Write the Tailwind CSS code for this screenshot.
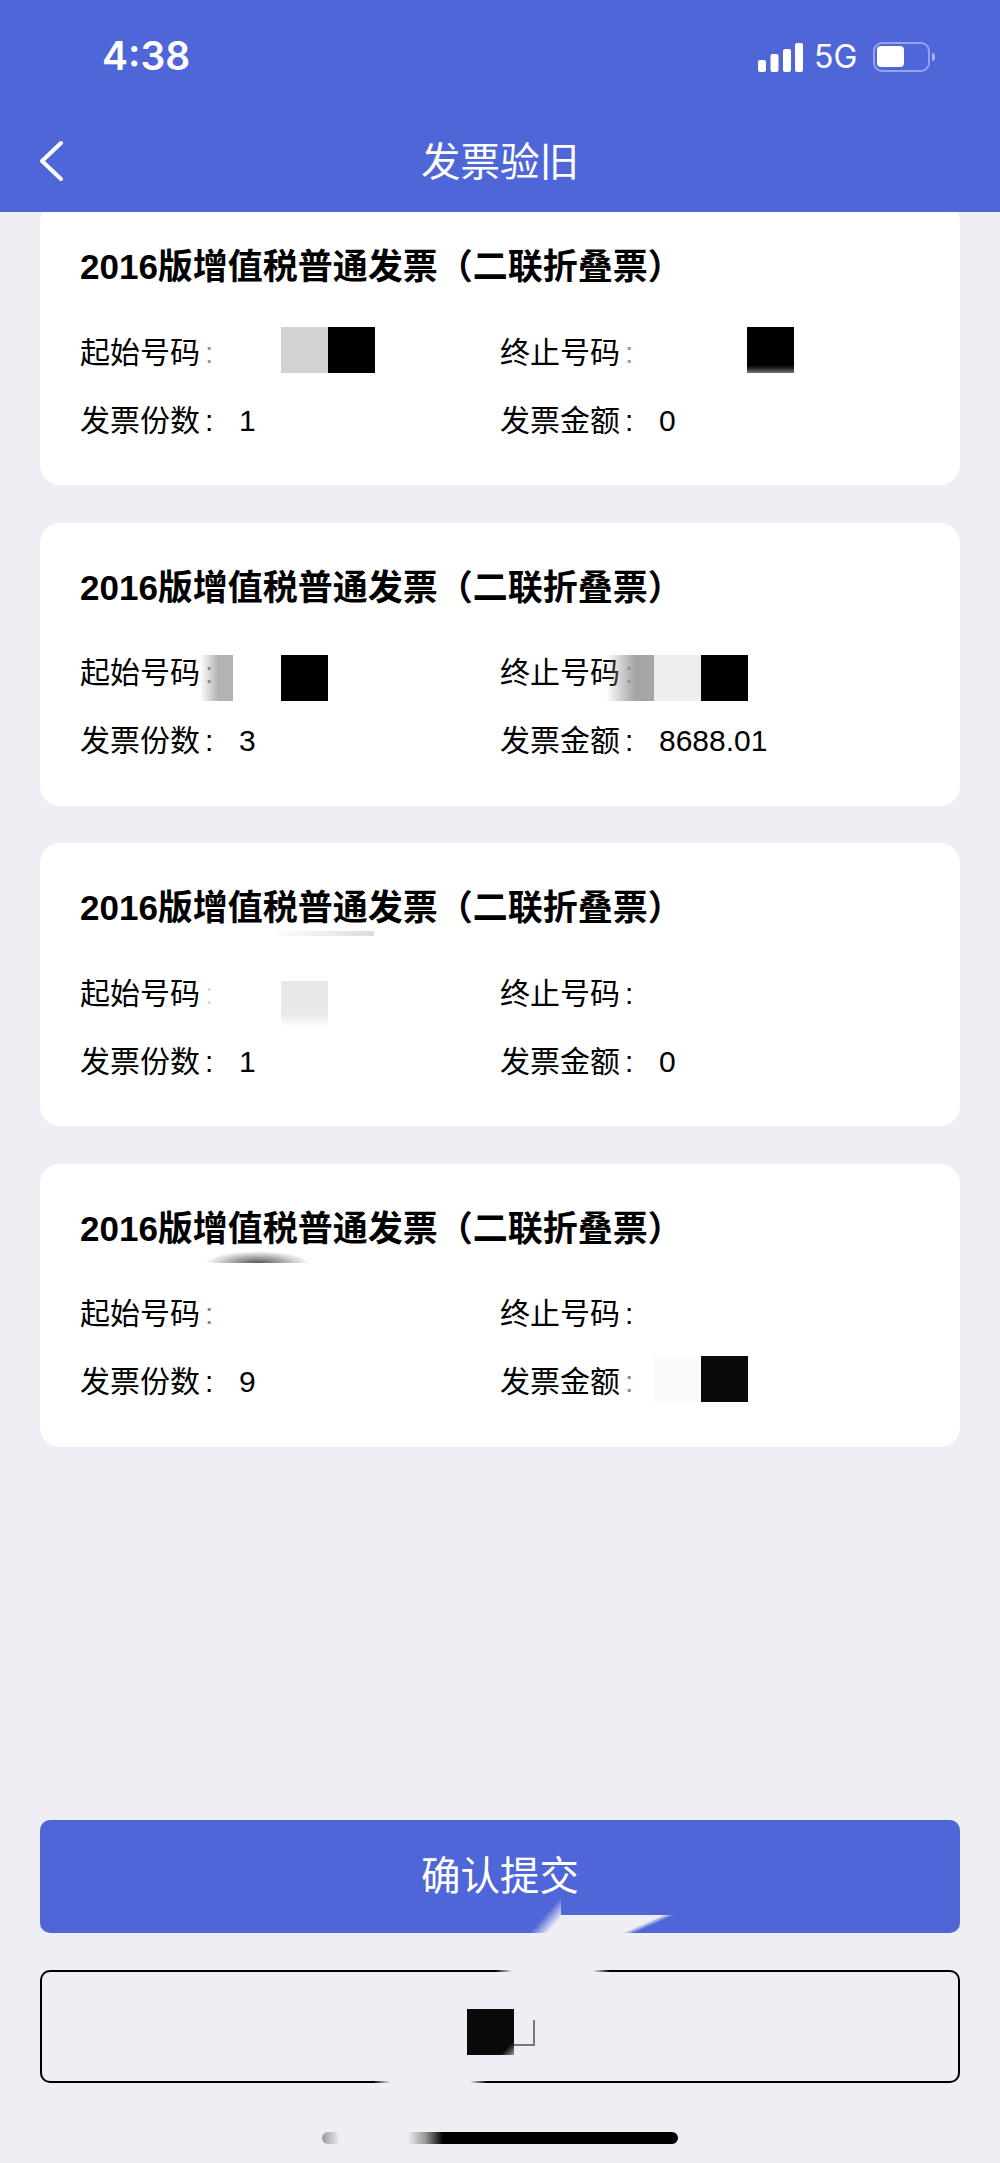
<!DOCTYPE html>
<html lang="zh-CN">
<head>
  <meta charset="UTF-8" />
  <meta name="viewport" content="width=device-width, initial-scale=1.0" />
  <title>发票验旧</title>
  <script src="https://cdn.jsdelivr.net/npm/@tailwindcss/browser@4"></script>
</head>
<body class="bg-[#efeef4] text-black font-['Liberation_Sans','Noto_Sans_CJK_SC',sans-serif]">
<div class="w-[1000px] h-[2163px] overflow-hidden flex flex-col">

  <!-- header with status bar -->
  <header class="relative z-10 h-[212px] shrink-0 bg-[#4f66d9] text-white">
    <div class="h-[114px] flex items-start justify-between pt-[33px] pl-[102px] pr-[65px]">
      <span class="font-['Inter'] font-semibold text-[39px] leading-[46px]">4:38</span>
      <div class="flex items-center pt-[6px]">
        <svg width="46" height="30" viewBox="0 0 46 30" fill="#fff" class="mr-[10px]">
          <rect x="0" y="18" width="8" height="12" rx="2" />
          <rect x="12.5" y="12" width="8" height="18" rx="2" />
          <rect x="25" y="7" width="8" height="23" rx="2" />
          <rect x="37" y="1" width="8" height="29" rx="2" />
        </svg>
        <span class="font-['Inter'] text-[32px] leading-[36px] w-[59px]">5G</span>
        <div class="w-[57px] h-[30px] rounded-[9px] border-2 border-white/40 p-[2px]">
          <div class="w-[27px] h-[21px] bg-white rounded-[4px]"></div>
        </div>
        <div class="w-[3px] h-[8px] ml-[2px] bg-white/50 rounded-r-full"></div>
      </div>
    </div>
    <div class="relative h-[92px] flex items-center justify-center">
      <svg width="26" height="44" viewBox="0 0 26 44" fill="none" stroke="#fff" stroke-width="4" stroke-linecap="round" stroke-linejoin="round" class="absolute left-[38px] top-[25px]">
        <path d="M23 4 L4 22 L23 40" />
      </svg>
      <span class="text-[39.5px] leading-[46px] mt-[4px]">发票验旧</span>
    </div>
  </header>

  <main class="flex-1 flex flex-col -mt-[10px] px-[40px]">
    <div class="flex flex-col gap-[37.5px]">

      <section class="relative h-[283px] rounded-[20px] bg-white pl-[40px]">
        <h2 class="pt-[43px] h-[87px] text-[35px] leading-[44px] font-bold">2016版增值税普通发票（二联折叠票）</h2>
        <div class="mt-[29px] grid grid-cols-[420px_1fr] auto-rows-[68px] items-center text-[30px]">
          <div class="flex"><span class="w-[159px]">起始号码<span class="ml-[5px] text-[#999]">:</span></span></div>
          <div class="flex"><span class="w-[159px]">终止号码<span class="ml-[5px] text-[#999]">:</span></span></div>
          <div class="flex"><span class="w-[159px]">发票份数<span class="ml-[5px]">:</span></span><span>1</span></div>
          <div class="flex"><span class="w-[159px]">发票金额<span class="ml-[5px]">:</span></span><span>0</span></div>
        </div>
        <div class="absolute left-[241px] top-[125px] flex h-[46px]">
          <div class="w-[47px] bg-[#d2d2d2]"></div>
          <div class="w-[47px] bg-black"></div>
        </div>
        <div class="absolute left-[707px] top-[125px] w-[47px] h-[46px] bg-gradient-to-b from-black from-80% to-[#777]"></div>
      </section>

      <section class="relative h-[283px] rounded-[20px] bg-white pl-[40px]">
        <h2 class="pt-[43px] h-[87px] text-[35px] leading-[44px] font-bold">2016版增值税普通发票（二联折叠票）</h2>
        <div class="mt-[29px] grid grid-cols-[420px_1fr] auto-rows-[68px] items-center text-[30px]">
          <div class="flex"><span class="w-[159px]">起始号码<span class="ml-[5px] text-[#777]">:</span></span></div>
          <div class="flex"><span class="w-[159px]">终止号码<span class="ml-[5px] text-[#777]">:</span></span></div>
          <div class="flex"><span class="w-[159px]">发票份数<span class="ml-[5px]">:</span></span><span>3</span></div>
          <div class="flex"><span class="w-[159px]">发票金额<span class="ml-[5px]">:</span></span><span>8688.01</span></div>
        </div>
        <div class="absolute left-[160px] top-[132px] w-[33px] h-[46px] bg-gradient-to-r from-white/0 to-[#aaaaaa]/90 to-55%"></div>
        <div class="absolute left-[241px] top-[132px] w-[47px] h-[46px] bg-black"></div>
        <div class="absolute left-[566px] top-[132px] flex h-[46px]">
          <div class="w-[48px] bg-gradient-to-r from-white/0 to-[#9c9c9c]/90 to-60%"></div>
          <div class="w-[47px] bg-[#eeeeee]"></div>
          <div class="w-[47px] bg-black"></div>
        </div>
      </section>

      <section class="relative h-[283px] rounded-[20px] bg-white pl-[40px]">
        <h2 class="pt-[43px] h-[87px] text-[35px] leading-[44px] font-bold">2016版增值税普通发票（二联折叠票）</h2>
        <div class="mt-[29px] grid grid-cols-[420px_1fr] auto-rows-[68px] items-center text-[30px]">
          <div class="flex"><span class="w-[159px]">起始号码<span class="ml-[5px] text-[#ddd]">:</span></span></div>
          <div class="flex"><span class="w-[159px]">终止号码<span class="ml-[5px]">:</span></span></div>
          <div class="flex"><span class="w-[159px]">发票份数<span class="ml-[5px]">:</span></span><span>1</span></div>
          <div class="flex"><span class="w-[159px]">发票金额<span class="ml-[5px]">:</span></span><span>0</span></div>
        </div>
        <div class="absolute left-[228px] top-[88px] w-[106px] h-[5px] bg-gradient-to-r from-white/0 to-[#dddddd]"></div>
        <div class="absolute left-[241px] top-[138px] w-[47px] h-[46px] bg-gradient-to-b from-[#e8e8e8] from-70% to-white"></div>
      </section>

      <section class="relative h-[283px] rounded-[20px] bg-white pl-[40px]">
        <h2 class="pt-[43px] h-[87px] text-[35px] leading-[44px] font-bold">2016版增值税普通发票（二联折叠票）</h2>
        <div class="mt-[29px] grid grid-cols-[420px_1fr] auto-rows-[68px] items-center text-[30px]">
          <div class="flex"><span class="w-[159px]">起始号码<span class="ml-[5px] text-[#888]">:</span></span></div>
          <div class="flex"><span class="w-[159px]">终止号码<span class="ml-[5px]">:</span></span></div>
          <div class="flex"><span class="w-[159px]">发票份数<span class="ml-[5px]">:</span></span><span>9</span></div>
          <div class="flex"><span class="w-[159px]">发票金额<span class="ml-[5px] text-[#888]">:</span></span></div>
        </div>
        <div class="absolute left-[165px] top-[87px] w-[105px] h-[12px] bg-[radial-gradient(ellipse_at_50%_100%,#555_0%,#ffffff00_70%)]"></div>
        <div class="absolute left-[614px] top-[192px] flex h-[46px]">
          <div class="w-[47px] bg-[#fafafa]"></div>
          <div class="w-[47px] bg-[#0a0a0a]"></div>
        </div>
      </section>
    </div>

    <div class="flex-1"></div>

    <div class="relative h-[113px] rounded-[10px] bg-[#4f66d9] text-white text-[39.5px] flex items-center justify-center">
      <span>确认提交</span>
      <!-- smear over the lower edge of the button -->
      <svg width="170" height="43" viewBox="0 0 170 43" class="absolute left-[480px] top-[70px]">
        <defs>
          <linearGradient id="smearLeft" gradientUnits="userSpaceOnUse" x1="25" y1="25" x2="35.6" y2="34.1">
            <stop offset="0" stop-color="#efeef4" stop-opacity="0" />
            <stop offset="1" stop-color="#efeef4" />
          </linearGradient>
          <linearGradient id="smearRight" gradientUnits="userSpaceOnUse" x1="153" y1="20.5" x2="155" y2="25">
            <stop offset="0" stop-color="#efeef4" />
            <stop offset="1" stop-color="#efeef4" stop-opacity="0" />
          </linearGradient>
        </defs>
        <rect x="0" y="0" width="41" height="43" fill="url(#smearLeft)" />
        <rect x="41" y="25" width="129" height="18" fill="url(#smearRight)" />
      </svg>
    </div>

    <div class="relative mt-[37px] h-[113px] rounded-[10px] border-2 border-black">
      <div class="absolute left-[453px] -top-[2px] w-[115px] h-[2px] bg-[linear-gradient(to_right,#efeef400_0%,#efeef4_15%,#efeef4_85%,#efeef400_100%)]"></div>
      <div class="absolute left-[331px] -bottom-[2px] w-[114px] h-[2px] bg-[linear-gradient(to_right,#efeef400_0%,#efeef4_15%,#efeef4_85%,#efeef400_100%)]"></div>
      <div class="absolute left-[425px] top-[37px] w-[47px] h-[46px] bg-[linear-gradient(135deg,#0a0a0a_85%,#999_100%)]"></div>
      <div class="absolute left-[472px] top-[48px] w-[21px] h-[26px] border-r-2 border-b-2 border-[#777]"></div>
    </div>

    <div class="mt-[49px] mx-[282px] h-[12px] rounded-full bg-[linear-gradient(to_right,#999_0%,#efeef4_5%,#efeef4_24%,#999_29%,#000_34%)]"></div>
    <div class="h-[19px]"></div>
  </main>
</div>
</body>
</html>
